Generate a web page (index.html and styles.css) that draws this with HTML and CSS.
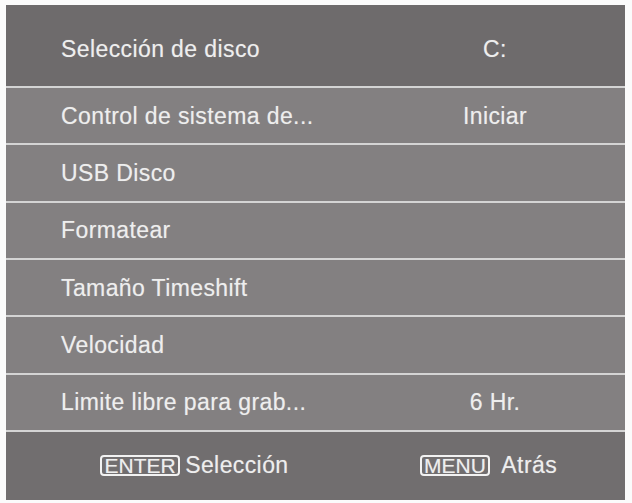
FILE: index.html
```html
<!DOCTYPE html>
<html lang="es">
<head>
<meta charset="utf-8">
<title>PVR</title>
<link rel="stylesheet" href="styles.css">
</head>
<body>
<div class="panel">
  <div class="row header">
    <span class="label">Selección de disco</span>
    <span class="value">C:</span>
  </div>
  <div class="row">
    <span class="label">Control de sistema de...</span>
    <span class="value">Iniciar</span>
  </div>
  <div class="row">
    <span class="label">USB Disco</span>
    <span class="value"></span>
  </div>
  <div class="row">
    <span class="label">Formatear</span>
    <span class="value"></span>
  </div>
  <div class="row">
    <span class="label">Tamaño Timeshift</span>
    <span class="value"></span>
  </div>
  <div class="row">
    <span class="label">Velocidad</span>
    <span class="value"></span>
  </div>
  <div class="row">
    <span class="label">Limite libre para grab...</span>
    <span class="value">6 Hr.</span>
  </div>
  <div class="footer">
    <div class="hint hint-enter"><span class="key">ENTER</span><span class="hint-text">Selección</span></div>
    <div class="hint hint-menu"><span class="key">MENU</span><span class="hint-text">Atrás</span></div>
  </div>
</div>
</body>
</html>
```
FILE: styles.css
```css
html, body {
  margin: 0;
  padding: 0;
  background: #fbfbfb;
}
body {
  width: 632px;
  height: 503px;
  overflow: hidden;
  font-family: "Liberation Sans", Arial, sans-serif;
  color: #eeeeee;
}
.panel {
  margin: 5px 0 0 6px;
  width: 619px;
  height: 495px;
  display: flex;
  flex-direction: column;
  background: #d4d4d4;
}
.row {
  display: grid;
  grid-template-columns: 1fr 180px;
  align-items: center;
  height: 55.33px;
  padding: 0 40px 0 55px;
  margin-bottom: 2px;
  background: #838081;
  font-size: 23px;
  letter-spacing: 0.4px;
  line-height: 24px;
  text-shadow: 0 0 1px rgba(255, 255, 255, 0.35);
}
.row.header {
  height: 81px;
  padding-top: 7px;
  box-sizing: border-box;
  background: #6e6b6c;
}
.label {
  white-space: nowrap;
}
.value {
  text-align: center;
}
.footer {
  flex: 1;
  display: flex;
  align-items: center;
  padding-left: 94px;
  background: #716e6f;
  font-size: 23px;
  letter-spacing: 0.4px;
  text-shadow: 0 0 1px rgba(255, 255, 255, 0.35);
}
.hint {
  display: flex;
  align-items: center;
}
.hint-menu {
  margin-left: 131px;
}
.key {
  font-size: 21px;
  line-height: 17px;
  letter-spacing: 0;
  padding: 0 2.5px;
  border: 2px solid #f2f2f2;
  border-radius: 4px;
}
.hint-enter .hint-text {
  margin-left: 5px;
}
.hint-menu .hint-text {
  margin-left: 11px;
}
```
